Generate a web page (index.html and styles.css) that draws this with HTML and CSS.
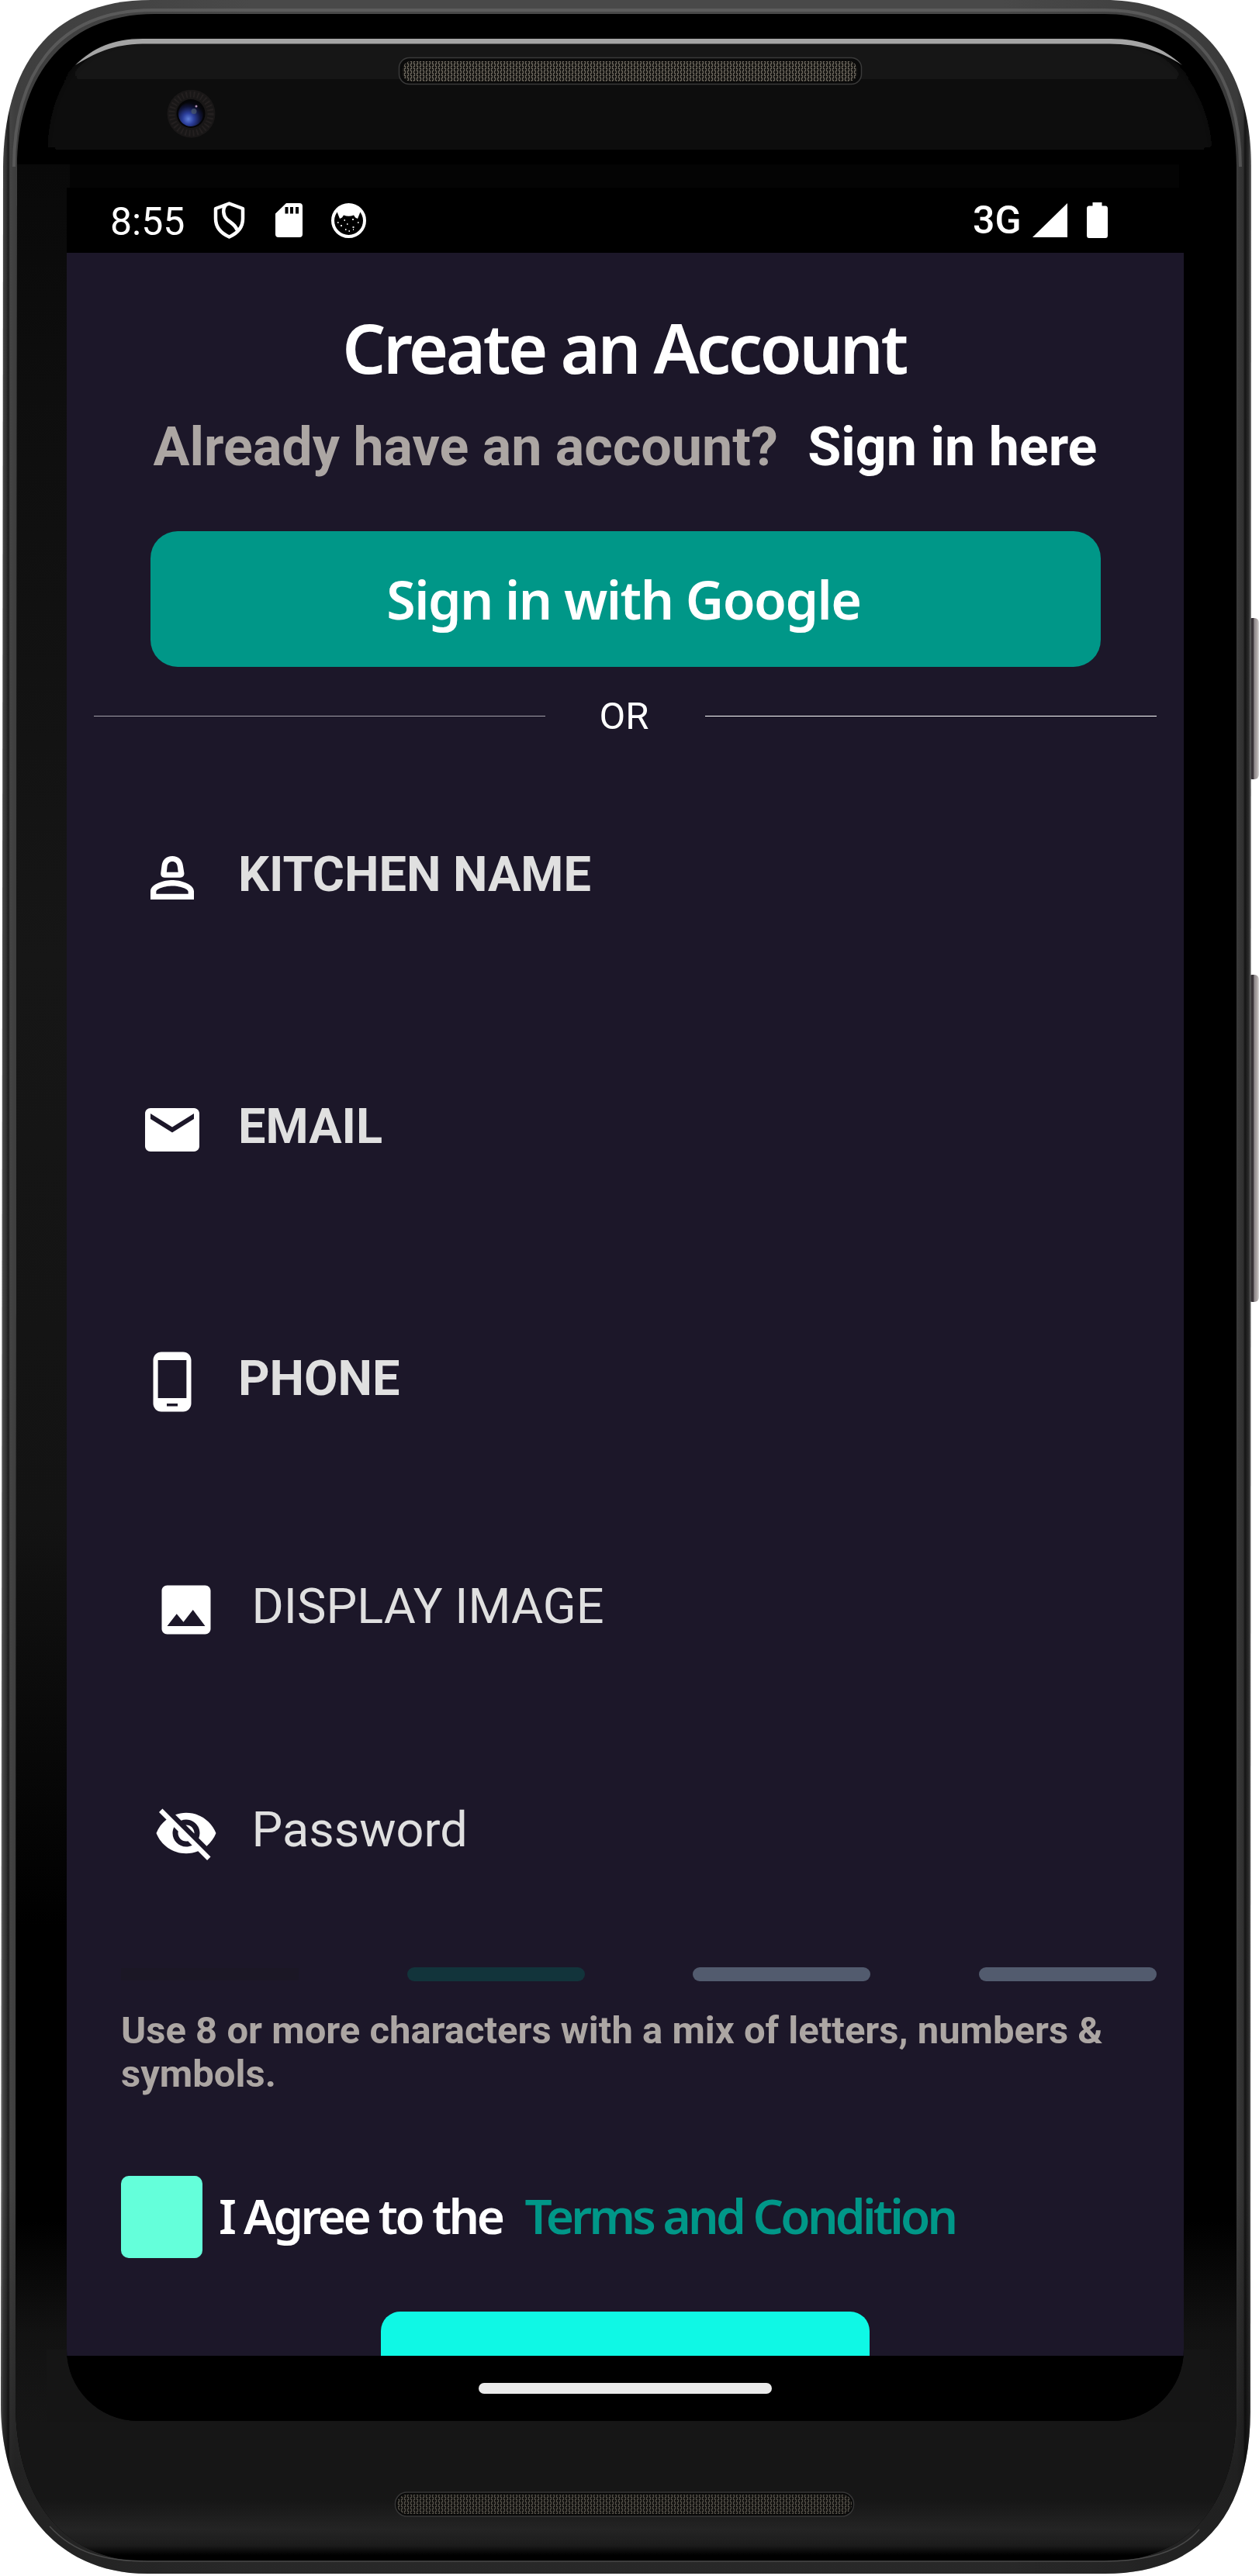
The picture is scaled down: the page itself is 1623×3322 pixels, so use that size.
FILE: index.html
```html
<!DOCTYPE html>
<html lang="en">
<head>
<meta charset="utf-8">
<title>Create an Account</title>
<link rel="stylesheet" href="styles.css">
</head>
<body>
<div class="device">
  <svg class="device-shell" viewBox="0 0 1623 3322" aria-hidden="true">
    <defs>
      <linearGradient id="rim" x1="0" x2="1" y1="0" y2="0">
        <stop offset="0" stop-color="#7a7a7a"/><stop offset=".002" stop-color="#444"/>
        <stop offset=".005" stop-color="#2c2c2c"/><stop offset=".006" stop-color="#1a1a1a"/>
        <stop offset=".0075" stop-color="#444"/><stop offset=".0115" stop-color="#3e3e3e"/>
        <stop offset=".2" stop-color="#494949"/>
        <stop offset=".8" stop-color="#494949"/><stop offset=".9885" stop-color="#3a3a3a"/>
        <stop offset=".9935" stop-color="#303030"/><stop offset=".995" stop-color="#151515"/>
        <stop offset=".998" stop-color="#2c2c2c"/><stop offset="1" stop-color="#6a6a6a"/>
      </linearGradient>
      <linearGradient id="rimShade" x1="0" x2="0" y1="0" y2="1">
        <stop offset="0" stop-color="#000" stop-opacity="0"/><stop offset=".85" stop-color="#000" stop-opacity="0"/>
        <stop offset=".96" stop-color="#000" stop-opacity=".45"/><stop offset="1" stop-color="#000" stop-opacity=".45"/>
      </linearGradient>
      <linearGradient id="forehead" x1="0" x2="0" y1="0" y2="1">
        <stop offset="0" stop-color="#161616"/><stop offset=".45" stop-color="#0e0e0e"/><stop offset=".8" stop-color="#050505"/><stop offset="1" stop-color="#040404"/>
      </linearGradient>
      <linearGradient id="sideLeft" x1="0" x2="0" y1="0" y2="1">
        <stop offset="0" stop-color="#090909"/><stop offset=".1" stop-color="#0e0e0e"/>
        <stop offset=".35" stop-color="#161616"/><stop offset=".6" stop-color="#131313"/>
        <stop offset=".78" stop-color="#000"/><stop offset=".91" stop-color="#000"/>
        <stop offset=".96" stop-color="#121212"/><stop offset="1" stop-color="#161616"/>
      </linearGradient>
      <linearGradient id="sideRight" x1="0" x2="0" y1="0" y2="1">
        <stop offset="0" stop-color="#000"/><stop offset=".91" stop-color="#000"/>
        <stop offset=".96" stop-color="#121212"/><stop offset="1" stop-color="#161616"/>
      </linearGradient>
      <linearGradient id="chin" x1="0" x2="0" y1="0" y2="1">
        <stop offset="0" stop-color="#161616"/><stop offset=".55" stop-color="#161616"/>
        <stop offset=".76" stop-color="#242424"/><stop offset=".87" stop-color="#1c1c1c"/>
        <stop offset=".94" stop-color="#000"/><stop offset="1" stop-color="#000"/>
      </linearGradient>
      <linearGradient id="key" x1="0" x2="1" y1="0" y2="0">
        <stop offset="0" stop-color="#2a2629"/><stop offset=".5" stop-color="#3a3539"/>
        <stop offset=".6" stop-color="#8e888b"/><stop offset=".85" stop-color="#b0aaa9"/><stop offset="1" stop-color="#ddd"/>
      </linearGradient>
      <radialGradient id="lens" cx=".4" cy=".7" r=".65">
        <stop offset="0" stop-color="#5f7fd8"/><stop offset=".35" stop-color="#2c3f9c"/>
        <stop offset=".75" stop-color="#101438"/><stop offset="1" stop-color="#07070d"/>
      </radialGradient>
      <pattern id="mesh" width="8" height="6" patternUnits="userSpaceOnUse">
        <rect width="8" height="6" fill="#12110f"/>
        <path d="M1 .5l2 2M5 2.500l2-2M1 5.500l2-2M5 3.500l2 2" stroke="#7d776b" stroke-width="1.400"/>
      </pattern>
      <clipPath id="glass"><path d="M22 215C22 110 75 18 200 18H1424C1535 18 1594 105 1594 215V3110C1594 3225 1535 3303 1424 3303H190C75 3303 20 3215 20 3100Z"/></clipPath>
      <filter id="soft" x="-5%" y="-15%" width="110%" height="130%"><feGaussianBlur stdDeviation="5"/></filter>
    </defs>
    <rect x="1608" y="797" width="15" height="208" rx="6" fill="url(#key)"/>
    <rect x="1608" y="1257" width="15" height="422" rx="6" fill="url(#key)"/>
    <path fill="url(#rim)" d="M4 215C5 90 60 0 195 0H1424C1555 0 1613 95 1613 215L1612 3110C1611 3240 1550 3319 1424 3319H190C65 3319 1 3220 1 3100Z"/>
    <path fill="url(#rimShade)" d="M4 215C5 90 60 0 195 0H1424C1555 0 1613 95 1613 215L1612 3110C1611 3240 1550 3319 1424 3319H190C65 3319 1 3220 1 3100Z"/>
    <path fill="none" stroke="#717171" stroke-width="4" opacity=".5" d="M18 215C18 100 70 13 197 13H1424C1545 13 1598 100 1599 215"/>
    <g clip-path="url(#glass)">
      <rect x="18" y="16" width="1580" height="3290" fill="#000"/>
      <path d="M60 240V212C60 120 95 52 185 52H1430C1520 52 1564 130 1564 212V240Z" fill="url(#forehead)" filter="url(#soft)"/>
      <rect x="20" y="212" width="1574" height="40" fill="#040404"/>
      <rect x="20" y="212" width="70" height="2915" fill="url(#sideLeft)"/>
      <rect x="1520" y="212" width="75" height="2915" fill="url(#sideRight)"/>
      <rect x="60" y="3030" width="1500" height="100" fill="#151515"/>
      <rect x="18" y="3124" width="1580" height="182" fill="url(#chin)"/>
    </g>
    <path fill="#a5a5a5" d="M97 84C120 62 145 50 184 50H1432C1472 50 1500 62 1524 84C1500 68 1470 56.500 1430 56.500H184C145 57 122 69 97 84Z"/>
    <path fill="none" stroke="#4a4a4a" stroke-width="1.500" d="M64 3258C95 3292 135 3303 190 3303H1424C1480 3303 1522 3290 1546 3262"/>
    <rect x="514.500" y="74.500" width="596" height="34" rx="13" fill="#0a0a0a" stroke="#3a3a3a" stroke-width="1.500"/>
    <rect x="519" y="79" width="586" height="26" rx="11" fill="url(#mesh)"/>
    <rect x="509.500" y="3214" width="591" height="31" rx="15" fill="#080808" stroke="#363636" stroke-width="1.500"/>
    <rect x="512" y="3217" width="586" height="25" rx="12" fill="url(#mesh)" opacity=".75"/>
    <circle cx="246.500" cy="146.700" r="31" fill="#191717"/>
    <circle cx="246.500" cy="146.700" r="25" fill="none" stroke="#242020" stroke-width="8" stroke-dasharray="2 3"/>
    <circle cx="246" cy="146.500" r="18.500" fill="#050507"/>
    <circle cx="246" cy="147" r="16" fill="url(#lens)"/>
    <circle cx="250" cy="143.500" r="3.500" fill="#4c5a6c" opacity=".7"/>
    <circle cx="253" cy="137" r="1.500" fill="#b08fb5"/>
  </svg>

  <main class="screen">
    <header class="status">
      <span class="clock">8:55</span>
      <svg class="s-shield" viewBox="0 0 40 48"><path d="M20 2.500L37.500 9V22C37.500 33 30 41 20 45.500C10 41 2.500 33 2.500 22V9Z" fill="none" stroke="#fff" stroke-width="4.500" stroke-linejoin="round"/><path d="M16 4C11 9 12 18 17 23C23 28 29 31 30 37" fill="none" stroke="#fff" stroke-width="4.500"/></svg>
      <svg class="s-card" viewBox="0 0 35 44"><path fill="#fff" fill-rule="evenodd" d="M14 0H31Q35 0 35 4V40Q35 44 31 44H4Q0 44 0 40V13.500ZM12.500 5V13.500H16.500V5ZM19 5V13.500H23V5ZM26 5V13.500H30V5Z"/></svg>
      <svg class="s-face" viewBox="0 0 45 45"><circle cx="22.500" cy="22.500" r="20.500" fill="#000" stroke="#fff" stroke-width="4"/><path fill="#fff" d="M7 10Q22.500-6 38 10L34 20 31 18.500 29 15.500Q22.500 18 16 15.500L14 18.500 11 20Z"/><path d="M8 25h1.500m7-3h1.500m9-1h2m5 4h1.500M12 29h2m6-2h1.500m6 4h2M18 34h1.500m3 2h1.500m4-2h1" stroke="#ddd" stroke-width="1.800"/></svg>
      <span class="network">3G</span>
      <svg class="s-signal" viewBox="0 0 45 44"><path fill="#fff" d="M45 0V44H0Z"/></svg>
      <svg class="s-battery" viewBox="0 0 27 46"><path fill="#fff" d="M7.500 0H19.500V4.500H24Q27 4.500 27 8V42.500Q27 46 24 46H3Q0 46 0 42.500V8Q0 4.500 3 4.500H7.500Z"/></svg>
    </header>

    <section class="content">
      <h1 class="title">Create an Account</h1>
      <p class="signin"><span class="muted">Already have an account?</span><a class="signin-link">Sign in here</a></p>
      <button class="google">Sign in with Google</button>
      <div class="divider"><i class="rule rule-dim"></i><span class="or">OR</span><i class="rule"></i></div>

      <div class="fields">
        <label class="field strong"><svg class="icon" viewBox="0 0 24 24"><path fill-rule="evenodd" d="M12.050 4C14.400 4 15.700 5.500 15.950 7.500L16.400 10.200C16.500 11.200 15.900 11.900 14.900 11.900H9.200C8.200 11.900 7.700 11.200 7.800 10.200L8.150 7.500C8.400 5.500 9.700 4 12.050 4ZM12.050 6C11 6 10.300 6.700 10.150 7.900L9.950 9.950H14.200L13.950 7.900C13.800 6.700 13.100 6 12.050 6ZM12 12.850C14.700 12.850 20 14.100 20 17V20H4V17C4 14.100 9.300 12.850 12 12.850ZM12 15C9.500 15 6.100 16 6.100 17.100V17.950H17.900V17.100C17.900 16 14.500 15 12 15Z"/></svg><span>KITCHEN NAME</span></label>
        <label class="field strong"><svg class="icon" viewBox="0 0 24 24"><path d="M20 4H4c-1.100 0-1.990.9-1.990 2L2 18c0 1.100.9 2 2 2h16c1.100 0 2-.9 2-2V6c0-1.100-.9-2-2-2zm0 4l-8 5-8-5V6l8 5 8-5v2z"/></svg><span>EMAIL</span></label>
        <label class="field strong"><svg class="icon" viewBox="0 0 24 24"><path d="M16 1H8C6.340 1 5 2.340 5 4v16c0 1.660 1.340 3 3 3h8c1.660 0 3-1.340 3-3V4c0-1.660-1.340-3-3-3zm-2 20h-4v-1h4v1zm3.250-3H6.750V4h10.500v14z"/></svg><span>PHONE</span></label>
        <label class="field indent"><svg class="icon" viewBox="0 0 24 24"><path d="M21 19V5c0-1.100-.9-2-2-2H5c-1.100 0-2 .9-2 2v14c0 1.100.9 2 2 2h14c1.100 0 2-.9 2-2zM8.500 13.500l2.500 3.010L14.500 12l4.500 6H5l3.500-4.500z"/></svg><span>DISPLAY IMAGE</span></label>
        <label class="field indent"><svg class="icon" viewBox="0 0 24 24"><path d="M12 7c2.760 0 5 2.240 5 5 0 .65-.13 1.260-.36 1.830l2.920 2.920c1.510-1.260 2.700-2.890 3.430-4.750-1.730-4.390-6-7.500-11-7.500-1.400 0-2.740.25-3.980.7l2.160 2.160C10.740 7.130 11.350 7 12 7zM2 4.270l2.280 2.280.46.46C3.080 8.300 1.780 10.020 1 12c1.730 4.390 6 7.500 11 7.500 1.550 0 3.030-.3 4.380-.84l.42.42L19.730 22 21 20.730 3.270 3 2 4.270zM7.530 9.800l1.550 1.550c-.05.21-.08.43-.08.65 0 1.660 1.340 3 3 3 .22 0 .44-.03.65-.08l1.550 1.550c-.67.33-1.410.53-2.200.53-2.760 0-5-2.240-5-5 0-.79.2-1.530.53-2.200zm4.310-.78l3.150 3.150.02-.16c0-1.660-1.340-3-3-3l-.17.01z"/></svg><span>Password</span></label>
      </div>

      <div class="meter"><i class="seg seg-off"></i><i class="seg seg-low"></i><i class="seg"></i><i class="seg"></i></div>
      <p class="hint">Use 8 or more characters with a mix of letters, numbers &amp; symbols.</p>
      <div class="agree"><i class="check"></i><span class="agree-text">I Agree to the</span><a class="agree-text terms">Terms and Condition</a></div>
      <div class="submit"></div>
    </section>

    <footer class="nav"><i class="pill"></i></footer>
  </main>
</div>
</body>
</html>
```
FILE: styles.css
```css
* { box-sizing: border-box; }
body { margin: 0; background: #fff; }
h1, p { margin: 0; font-size: inherit; font-weight: inherit; }

.device {
  position: relative;
  width: 1623px;
  height: 3322px;
  padding: 242px 97px 200px 86px;
  overflow: hidden;
  font-family: Roboto, sans-serif;
  color: #fff;
}
.device-shell { position: absolute; inset: 0; width: 1623px; height: 3322px; }

.screen {
  position: relative;
  display: flex;
  flex-direction: column;
  width: 1440px;
  height: 2880px;
  overflow: hidden;
  background: #000;
  border-radius: 0 0 92px 92px;
}

/* status bar */
.status { display: flex; flex: none; height: 84px; padding: 0 98px 0 56px; align-items: flex-start; }
.status svg { flex: none; }
.clock { width: 133px; margin-top: 15px; font-size: 50px; line-height: 58px; white-space: nowrap; }
.s-shield { width: 41px; height: 48px; margin-top: 18px; }
.s-card { width: 35px; height: 44px; margin: 20px 0 0 39px; }
.s-face { width: 45px; height: 45px; margin: 20px 0 0 37px; }
.network { width: 77px; margin: 13px 0 0 auto; font-size: 50px; font-weight: 500; line-height: 58px; }
.s-signal { width: 45px; height: 44px; margin-top: 20px; }
.s-battery { width: 27px; height: 46px; margin: 19px 0 0 25px; }

/* form */
.content { display: flex; flex-direction: column; flex: none; height: 2712px; overflow: hidden; background: #1c1729; }
.title, .google, .agree { font-family: "Noto Sans", sans-serif; }
.title { height: 100px; margin: 72px 3px 0 0; text-align: center; font-size: 88px; font-weight: 600; line-height: 100px; letter-spacing: -3.5px; }
.signin { display: flex; flex: none; justify-content: center; gap: 38.500px; height: 82px; margin-top: 37px; font-size: 70px; font-weight: 700; line-height: 82px; white-space: nowrap; }
.muted { color: #aca6a3; }
.google { flex: none; width: 1225px; height: 175px; margin: 68px 0 0 107.500px; padding: 0 4px 0 0; border: 0; border-radius: 35px; background: #009788; color: #fff; font-size: 68px; font-weight: 600; line-height: 175px; letter-spacing: -1.5px; }
.divider { display: flex; flex: none; height: 58px; margin: 35px 35px 0; align-items: center; justify-content: space-between; font-size: 49px; line-height: 58px; }
.rule { width: 582px; height: 1px; margin-bottom: 2px; background: #fff; }
.rule-dim { background: #a39fa9; }
.or { padding-right: 3px; }

.fields { display: flex; flex-direction: column; flex: none; height: 1584px; padding: 137px 0 0 94px; }
.field { display: flex; flex: none; height: 84px; align-items: center; gap: 43px; color: #e0e0e0; font-size: 63px; line-height: 74px; }
.field span { margin-bottom: 8px; }
.field + .field { margin-top: 241px; }
.strong { font-weight: 700; }
.indent { padding-left: 17.500px; }
.strong + .indent { margin-top: 210px; }
.indent + .indent { margin-top: 204px; }
.icon { flex: none; width: 84px; height: 84px; fill: #fff; }

.meter { display: flex; flex: none; justify-content: space-between; height: 18px; margin: 0 35px 0 70px; }
.seg { width: 229px; height: 18px; border-radius: 9px; background: #525b6e; }
.seg-low { background: #12343b; }
.seg-off { height: 16px; margin-top: 1px; border-radius: 0; background: #1b1725; }
.hint { flex: none; width: 1300px; height: 114px; margin: 36px 0 0 70px; color: #aca6a3; font-size: 49px; font-weight: 700; line-height: 56px; }
.agree { display: flex; flex: none; align-items: center; height: 106px; margin: 101px 0 0 70px; font-size: 62px; font-weight: 600; letter-spacing: -3.5px; white-space: nowrap; }
.agree-text { margin-bottom: 4px; }
.check { width: 105px; height: 106px; margin-right: 21px; border-radius: 10px; background: #64ffda; }
.terms { margin-left: 29px; color: #009788; letter-spacing: -3.7px; }
.submit { flex: none; align-self: center; width: 630px; height: 175px; margin-top: 69px; border-radius: 25px; background: #0ff8e5; }

.nav { display: flex; height: 84px; align-items: center; justify-content: center; background: #000; }
.pill { width: 378px; height: 14px; border-radius: 7px; background: #ebebeb; }
```
